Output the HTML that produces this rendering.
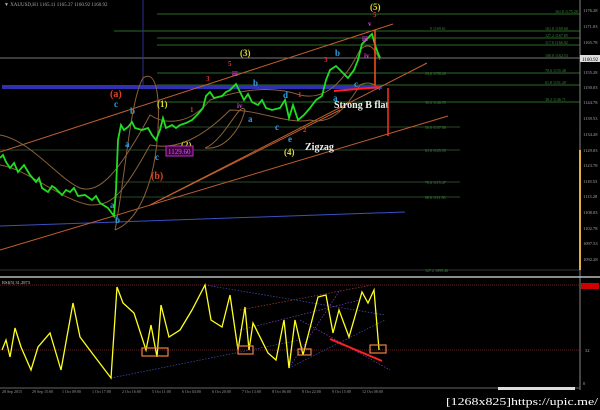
<!DOCTYPE html>
<html><head><meta charset="utf-8"><style>
html,body{margin:0;padding:0;background:#000;width:600px;height:410px;overflow:hidden}
svg{display:block}
text{font-family:"Liberation Serif",serif}
</style></head><body>
<svg width="600" height="410" viewBox="0 0 600 410" xmlns="http://www.w3.org/2000/svg">
<rect width="600" height="410" fill="#000"/>
<text x="4" y="6" fill="#aaa" font-size="5" font-family="Liberation Sans">▼ XAUUSD,H1  1165.11 1165.37 1160.92 1160.92</text>
<g stroke-width="1">
<line x1="157" y1="14" x2="580" y2="14" stroke="#2a6a2a"/>
<line x1="114" y1="31" x2="580" y2="31" stroke="#2a6a2a"/>
<line x1="157" y1="38" x2="580" y2="38" stroke="#2a6a2a"/>
<line x1="157" y1="45" x2="580" y2="45" stroke="#2a6a2a"/>
<line x1="0" y1="58" x2="580" y2="58" stroke="#777"/>
<line x1="157" y1="73" x2="580" y2="73" stroke="#2a6a2a"/>
<line x1="157" y1="85" x2="580" y2="85" stroke="#2a6a2a"/>
<line x1="157" y1="102" x2="580" y2="102" stroke="#2a6a2a"/>
<line x1="157" y1="127" x2="460" y2="127" stroke="#2a4a2a"/>
<line x1="0" y1="150" x2="460" y2="150" stroke="#2a4a2a"/>
<line x1="114" y1="182" x2="460" y2="182" stroke="#2a4a2a"/>
<line x1="114" y1="197" x2="460" y2="197" stroke="#2a4a2a"/>
<line x1="0" y1="270" x2="580" y2="270" stroke="#333"/>
</g>
<rect x="2" y="85" width="380" height="4" fill="#3030b0"/>
<line x1="143" y1="0" x2="143" y2="85" stroke="#303090"/>
<line x1="0" y1="226" x2="405" y2="212" stroke="#3a50c0"/>
<g fill="#3a8a3a" font-size="4" font-family="Liberation Sans">
<text x="555" y="13">161.8 1175.28</text><text x="430" y="30">0 1169.61</text>
<text x="545" y="30">161.8 1169.60</text><text x="545" y="37">127.2 1167.85</text>
<text x="545" y="44">117.6 1166.02</text><text x="545" y="57">100.0 1162.53</text>
<text x="545" y="72">78.6 1155.40</text><text x="425" y="75">23.6 1156.20</text>
<text x="545" y="84">61.8 1151.20</text><text x="425" y="104">38.2 1146.55</text>
<text x="545" y="101">38.2 1146.71</text><text x="425" y="129">50.0 1137.88</text>
<text x="425" y="152">61.8 1125.35</text><text x="425" y="184">78.6 1115.47</text>
<text x="425" y="199">88.6 1111.50</text><text x="425" y="272">127.2 1099.46</text>
</g>
<g stroke="#c06030" stroke-width="1" fill="none">
<line x1="0" y1="152" x2="393" y2="24"/>
<line x1="150" y1="205" x2="427" y2="63"/>
<line x1="0" y1="250" x2="448" y2="116"/>
<line x1="160" y1="200" x2="340" y2="110"/>
</g>
<g stroke="#8a6238" stroke-width="1" fill="none">
<path d="M0,135 C30,140 60,180 80,188 C100,195 120,170 150,115 C165,125 190,125 210,100 C240,90 270,85 300,95 C320,100 340,90 360,50 C370,40 375,50 380,60"/>
<path d="M0,165 C30,170 60,200 90,205 C110,205 120,200 150,145 C175,150 200,140 230,110 C260,110 290,125 310,120 C330,125 345,110 360,85 C370,80 375,85 380,90"/>
<path d="M115,230 C125,180 130,100 143,78 C155,70 160,90 158,130 C155,180 140,220 115,230"/>
<path d="M205,148 C225,140 240,100 245,110 C240,130 225,150 205,148"/>
</g>
<polyline fill="none" stroke="#22dd22" stroke-width="1.8" points="0,158 3,155 6,162 10,168 14,163 18,172 24,165 27,170 30,175 36,182 39,178 42,188 48,192 52,186 55,188 62,195 66,190 70,192 74,188 78,196 85,195 92,200 96,196 100,203 108,208 114,216 116,190 118,140 121,125 124,130 128,127 132,122 135,128 142,130 148,128 152,135 156,140 160,130 163,118 166,128 172,125 176,128 180,125 186,123 192,120 198,114 203,108 206,96 210,92 214,98 222,96 226,92 230,90 236,84 240,92 244,100 248,94 252,102 258,105 262,100 266,108 272,110 280,108 285,100 289,118 293,105 298,120 304,115 310,108 316,100 322,96 326,80 330,70 336,66 342,72 348,78 354,70 358,60 362,44 366,40 372,34 376,48 380,58"/>
<g font-size="9" font-weight="bold">
<text x="110" y="97" fill="#e04020" font-size="10">(a)</text>
<text x="151" y="179" fill="#e04020" font-size="10">(b)</text>
<text x="157" y="107" fill="#dddd30">(1)</text>
<text x="181" y="148" fill="#dddd30">(2)</text>
<text x="240" y="56" fill="#dddd30">(3)</text>
<text x="284" y="155" fill="#dddd30">(4)</text>
<text x="370" y="10" fill="#dddd30">(5)</text>
<text x="114" y="107" fill="#30a0e0">c</text><text x="130" y="114" fill="#30a0e0">b</text>
<text x="125" y="147" fill="#30a0e0">a</text><text x="155" y="160" fill="#30a0e0">c</text>
<text x="115" y="223" fill="#30a0e0">b</text><text x="110" y="208" fill="#30a0e0">a</text>
<text x="253" y="86" fill="#30a0e0">b</text><text x="248" y="122" fill="#30a0e0">a</text>
<text x="283" y="98" fill="#30a0e0">d</text><text x="275" y="130" fill="#30a0e0">c</text>
<text x="288" y="142" fill="#30a0e0">e</text><text x="335" y="56" fill="#30a0e0">b</text>
<text x="333" y="101" fill="#30a0e0">a</text><text x="354" y="87" fill="#30a0e0">c</text>
<text x="228" y="66" fill="#e03030" font-size="7">5</text><text x="206" y="81" fill="#e03030" font-size="7">3</text>
<text x="190" y="112" fill="#e03030" font-size="7">1</text><text x="373" y="17" fill="#e03030" font-size="7">5</text>
<text x="303" y="132" fill="#e03030" font-size="7">2</text><text x="298" y="97" fill="#e03030" font-size="7">1</text>
<text x="324" y="62" fill="#e03030" font-size="7">3</text>
<text x="232" y="76" fill="#d040d0" font-size="7">iii</text><text x="237" y="108" fill="#d040d0" font-size="7">iv</text>
<text x="362" y="41" fill="#d040d0" font-size="7">iii</text><text x="364" y="58" fill="#d040d0" font-size="7">iv</text>
<text x="368" y="26" fill="#d040d0" font-size="7">v</text>
<text x="334" y="108" fill="#f0f0f0" font-size="10">Strong B flat</text>
<text x="305" y="150" fill="#f0f0f0" font-size="10">Zigzag</text>
</g>
<rect x="166" y="146" width="27" height="10" fill="#400040" stroke="#c030c0"/>
<text x="168" y="154" fill="#c060ff" font-size="7" font-family="Liberation Sans">1129.60</text>
<line x1="375" y1="30" x2="375" y2="85" stroke="#ff5020" stroke-width="1.5"/>
<line x1="388" y1="88" x2="388" y2="136" stroke="#ff3020" stroke-width="1.5"/>
<line x1="334" y1="91" x2="380" y2="87" stroke="#ff2020" stroke-width="2"/>
<line x1="580" y1="0" x2="580" y2="390" stroke="#888"/>
<line x1="580" y1="150" x2="580" y2="270" stroke="#e0b040" stroke-width="2"/>
<g fill="#aaa" font-size="4.5" font-family="Liberation Sans">
<text x="583" y="12">1176.28</text><text x="583" y="28">1171.03</text><text x="583" y="44">1165.78</text>
<text x="583" y="74">1155.28</text><text x="583" y="89">1150.03</text><text x="583" y="104">1144.78</text>
<text x="583" y="120">1139.53</text><text x="583" y="136">1134.28</text><text x="583" y="152">1129.03</text>
<text x="583" y="167">1123.78</text><text x="583" y="183">1118.53</text><text x="583" y="198">1113.28</text>
<text x="583" y="214">1108.03</text><text x="583" y="230">1102.78</text><text x="583" y="245">1097.53</text>
<text x="583" y="261">1092.28</text>
</g>
<rect x="580" y="55" width="20" height="7" fill="#ddd"/>
<text x="582" y="61" fill="#000" font-size="5" font-family="Liberation Sans">1160.92</text>
<line x1="0" y1="277" x2="600" y2="277" stroke="#bbb" stroke-width="1.5"/>
<text x="2" y="284" fill="#ccc" font-size="4.5" font-family="Liberation Sans">RSI(5) 31.2873</text>
<line x1="0" y1="285" x2="580" y2="285" stroke="#602020" stroke-dasharray="1,1"/>
<line x1="0" y1="350" x2="580" y2="350" stroke="#602020" stroke-dasharray="1,1"/>
<rect x="581" y="283" width="18" height="6" fill="#d00000"/>
<text x="585" y="352" fill="#aaa" font-size="4.5" font-family="Liberation Sans">32</text>
<text x="583" y="385" fill="#aaa" font-size="4.5" font-family="Liberation Sans">0</text>
<g stroke-width="0.7" stroke-dasharray="1.5,1.5" fill="none">
<line x1="111" y1="378" x2="300" y2="340" stroke="#4050c0"/>
<line x1="205" y1="285" x2="385" y2="315" stroke="#4050c0"/>
<line x1="289" y1="368" x2="385" y2="320" stroke="#4050c0"/>
<line x1="289" y1="368" x2="340" y2="290" stroke="#8040c0"/>
<line x1="240" y1="310" x2="372" y2="285" stroke="#a04040"/>
<line x1="240" y1="330" x2="360" y2="300" stroke="#8040c0"/>
<line x1="300" y1="320" x2="390" y2="370" stroke="#8040c0"/>
</g>
<polyline fill="none" stroke="#ffff20" stroke-width="1.3" points="2,350 6,340 10,357 15,328 21,347 31,370 38,347 50,333 61,370 73,303 80,337 92,353 111,378 117,287 123,303 134,313 146,350 151,325 157,357 161,305 169,337 180,330 192,310 205,285 211,320 222,327 230,295 238,350 245,307 249,350 253,323 268,353 276,360 284,320 289,368 295,320 303,355 318,297 326,295 333,333 339,310 349,337 362,292 368,303 374,290 379,350"/>
<g fill="none" stroke="#f08040" stroke-width="1.2">
<rect x="142" y="348" width="26" height="8"/><rect x="238" y="346" width="15" height="8"/>
<rect x="298" y="349" width="13" height="6"/><rect x="370" y="345" width="16" height="8"/>
</g>
<line x1="330" y1="339" x2="382" y2="361" stroke="#ff2020" stroke-width="2"/>
<line x1="0" y1="388" x2="580" y2="388" stroke="#666"/>
<g fill="#999" font-size="4" font-family="Liberation Sans">
<text x="2" y="393">28 Sep 2015</text><text x="32" y="393">29 Sep 15:00</text><text x="62" y="393">1 Oct 09:00</text>
<text x="92" y="393">1 Oct 17:00</text><text x="122" y="393">2 Oct 16:00</text><text x="152" y="393">5 Oct 11:00</text>
<text x="182" y="393">6 Oct 04:00</text><text x="212" y="393">6 Oct 20:00</text><text x="242" y="393">7 Oct 13:00</text>
<text x="272" y="393">8 Oct 06:00</text><text x="302" y="393">8 Oct 22:00</text><text x="332" y="393">9 Oct 15:00</text>
<text x="362" y="393">12 Oct 08:00</text>
</g>
<rect x="498" y="387" width="77" height="3" fill="#ddd"/>
<text x="598" y="405" fill="#fff" font-size="10" text-anchor="end" font-family="Liberation Mono" textLength="152" lengthAdjust="spacingAndGlyphs">[1268x825]https://upic.me/</text>
</svg>
</body></html>
